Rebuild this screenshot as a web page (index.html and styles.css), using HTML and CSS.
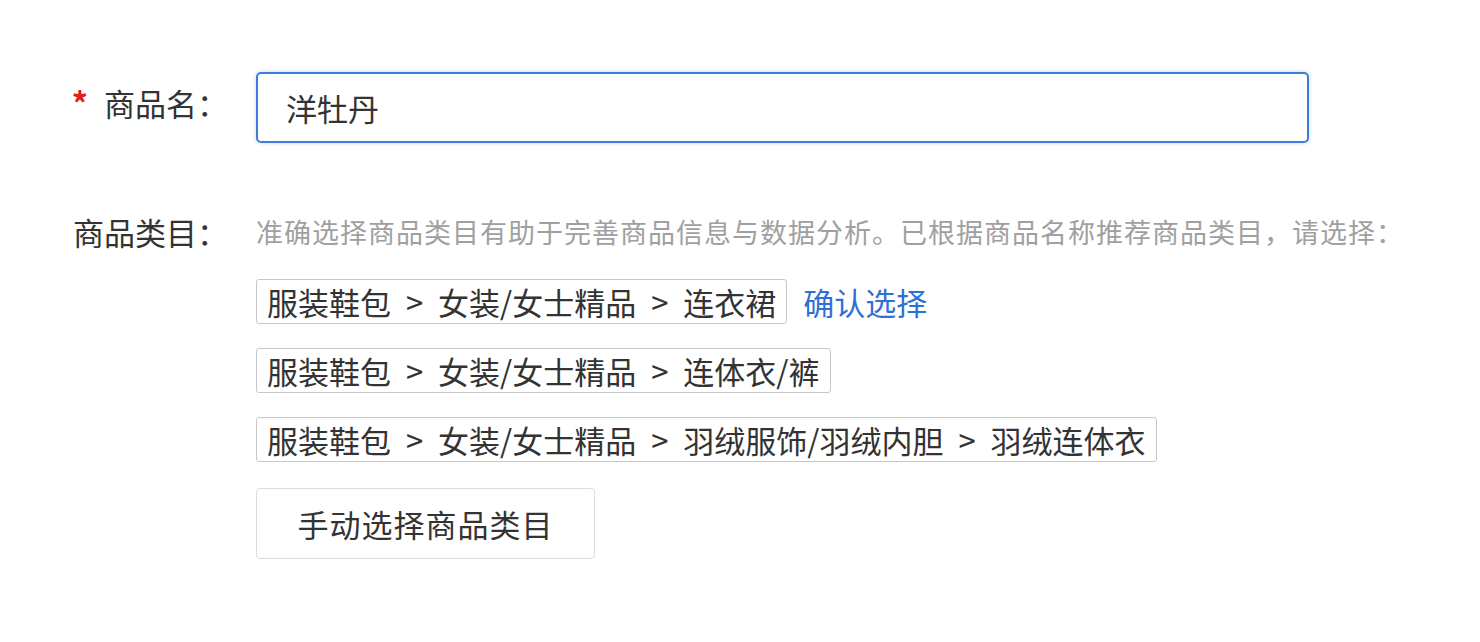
FILE: index.html
```html
<!DOCTYPE html>
<html lang="zh-CN">
<head>
  <meta charset="UTF-8" />
  <meta name="viewport" content="width=device-width, initial-scale=1.0" />
  <title>发布商品</title>
  <link rel="stylesheet" href="styles.css">
</head>
<body>

  <form class="goods-form">
    <div class="form-row row-name">
      <label class="form-label" for="goodsName"><span class="required">*</span>商品名：</label>
      <div class="form-field">
        <input class="name-input" id="goodsName" type="text" value="洋牡丹" />
      </div>
    </div>

    <div class="form-row row-category">
      <div class="form-label">商品类目：</div>
      <div class="form-field">
        <p class="hint">准确选择商品类目有助于完善商品信息与数据分析。已根据商品名称推荐商品类目，请选择：</p>
        <ul class="cat-list">
          <li class="cat-item">
            <span class="cat-path">服装鞋包 &gt; 女装/女士精品 &gt; 连衣裙</span>
            <a class="confirm-link" href="#">确认选择</a>
          </li>
          <li class="cat-item">
            <span class="cat-path">服装鞋包 &gt; 女装/女士精品 &gt; 连体衣/裤</span>
          </li>
          <li class="cat-item">
            <span class="cat-path">服装鞋包 &gt; 女装/女士精品 &gt; 羽绒服饰/羽绒内胆 &gt; 羽绒连体衣</span>
          </li>
        </ul>
        <button class="manual-button" type="button">手动选择商品类目</button>
      </div>
    </div>
  </form>

</body>
</html>
```

FILE: styles.css
```css
body {
  margin: 0;
  padding: 0;
  background-color: #fff;
  color: #333;
  font-family: "Noto Sans CJK SC", "Noto Sans", sans-serif;
}

.goods-form {
  padding-top: 72px;
}

.form-row {
  display: flex;
  align-items: flex-start;
}

.form-label {
  width: 228px;
  flex-shrink: 0;
  margin-right: 28px;
  text-align: right;
  font-size: 31px;
  color: #333;
}

.row-name .form-label {
  line-height: 60px;
}

.required {
  color: #e02020;
  font-size: 32px;
  font-weight: bold;
  margin-right: 16px;
}

.name-input {
  box-sizing: border-box;
  width: 1053px;
  height: 71px;
  padding: 0 28px;
  border: 2px solid #3b7ddd;
  border-radius: 5px;
  box-shadow: 0 0 4px rgba(59, 125, 221, 0.3);
  font-family: inherit;
  font-size: 31px;
  color: #333;
  outline: none;
}

.row-category {
  margin-top: 69px;
}

.row-category .form-label {
  line-height: 40px;
}

.hint {
  margin: 0;
  font-size: 27px;
  line-height: 40px;
  letter-spacing: 1px;
  color: #a0a0a0;
}

.cat-list {
  list-style: none;
  margin: 27px 0 0;
  padding: 0;
  display: flex;
  flex-direction: column;
  gap: 24px;
}

.cat-item {
  display: flex;
  align-items: center;
  gap: 16px;
}

.cat-path {
  box-sizing: border-box;
  height: 45px;
  padding: 0 10px;
  border: 1px solid #c8c8c8;
  border-radius: 3px;
  font-size: 31px;
  line-height: 43px;
  word-spacing: 8px;
  color: #333;
}

.confirm-link {
  font-size: 31px;
  color: #2f6fd8;
  text-decoration: none;
}

.manual-button {
  margin-top: 26px;
  width: 339px;
  height: 71px;
  background-color: #fff;
  border: 1px solid #dcdcdc;
  border-radius: 4px;
  font-family: inherit;
  font-size: 31px;
  letter-spacing: 1px;
  color: #333;
  cursor: pointer;
}
```
